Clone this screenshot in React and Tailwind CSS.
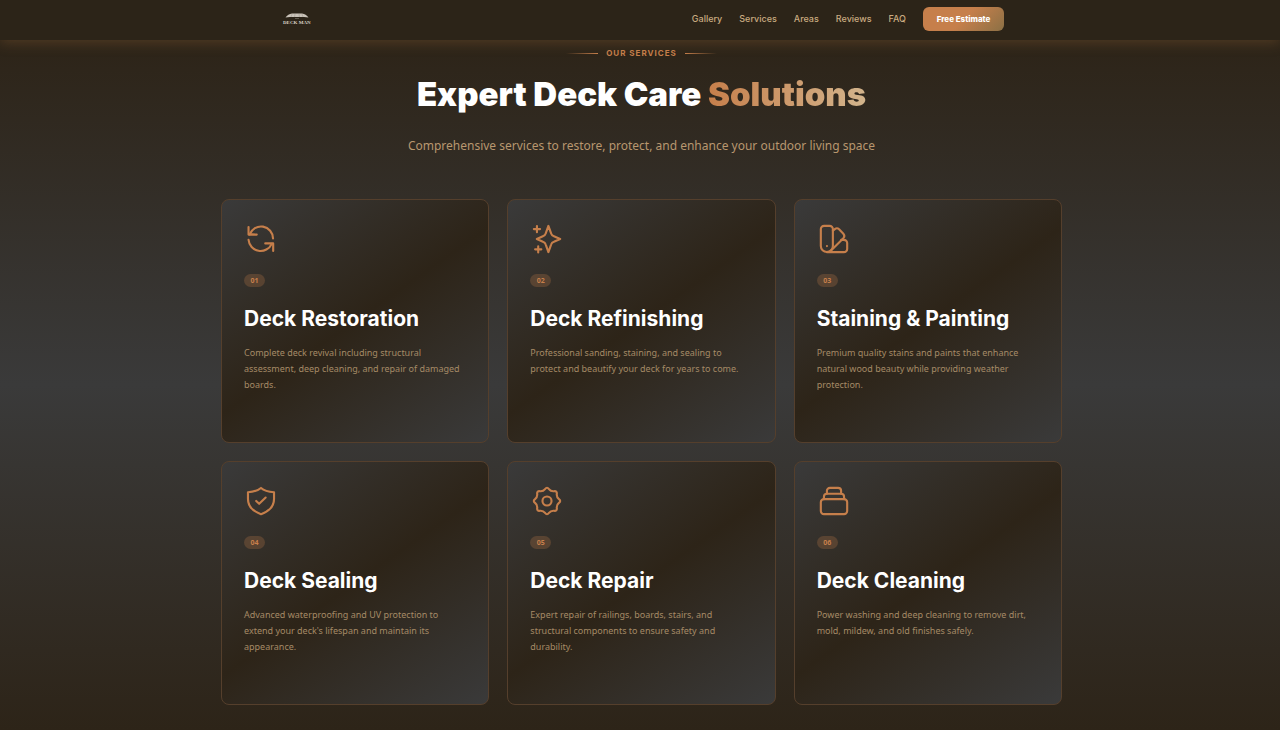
import React from "react";

const navLinks = ["Gallery", "Services", "Areas", "Reviews", "FAQ"];

// Gear outline: eight rounded teeth, alternating outer and inner control points
const gearPath = (() => {
  const points = Array.from({ length: 16 }, (_, i) => {
    const angle = (i * Math.PI) / 8;
    const radius = i % 2 === 0 ? 10.2 : 7.2;
    return [12 + radius * Math.sin(angle), 12 - radius * Math.cos(angle)];
  });
  const mid = (a, b) => `${((a[0] + b[0]) / 2).toFixed(2)} ${((a[1] + b[1]) / 2).toFixed(2)}`;
  let d = `M${mid(points[15], points[0])}`;
  points.forEach((p, i) => {
    d += `Q${p[0].toFixed(2)} ${p[1].toFixed(2)} ${mid(p, points[(i + 1) % 16])}`;
  });
  return d + "Z";
})();

const services = [
  {
    number: "01",
    title: "Deck Restoration",
    text: "Complete deck revival including structural assessment, deep cleaning, and repair of damaged boards.",
    icon: (
      <>
        <path d="M20.5 11.6A8.5 8.5 0 0 0 4 8.8" />
        <path d="M3.2 3.6V8.9H9L3.6 8.6" />
        <path d="M3.2 12.5A8.6 8.6 0 0 0 19.6 15.4" />
        <path d="M20.6 20.4V15.1H15" />
      </>
    ),
  },
  {
    number: "02",
    title: "Deck Refinishing",
    text: "Professional sanding, staining, and sealing to protect and beautify your deck for years to come.",
    icon: (
      <>
        <path d="M13 2.8 14.9 8.1Q15.4 9.6 16.9 10.1L21.3 12 16.9 13.9Q15.4 14.4 14.9 15.9L13 21.2 11.1 15.9Q10.6 14.4 9.1 13.9L4.8 12 9.1 10.1Q10.6 9.6 11.1 8.1Z" />
        <path d="M4.9 2.8V7.2M2.7 5H7.1" />
        <path d="M5.8 17.1V21.5M3.6 19.3H8" />
      </>
    ),
  },
  {
    number: "03",
    title: "Staining & Painting",
    text: "Premium quality stains and paints that enhance natural wood beauty while providing weather protection.",
    icon: (
      <>
        <path d="M11.2 16.9a4.25 4.25 0 0 1-8.5 0V5a2.3 2.3 0 0 1 2.3-2.3h3.9A2.3 2.3 0 0 1 11.2 5Z" />
        <path d="M11.2 6.2 12.6 5a2.3 2.3 0 0 1 3 .1l3 3.2a2.3 2.3 0 0 1 0 3.1L9.9 20.1" />
        <path d="M17.1 12.6H19a2.3 2.3 0 0 1 2.3 2.3V19a2.3 2.3 0 0 1-2.3 2.3H7" />
        <path d="M7 17h.01" />
      </>
    ),
  },
  {
    number: "04",
    title: "Deck Sealing",
    text: "Advanced waterproofing and UV protection to extend your deck's lifespan and maintain its appearance.",
    icon: (
      <>
        <path d="M12 2.8C10.2 4.4 7.2 5.5 2.8 5.8V10.5C2.8 16.2 7.6 19.7 12 21.3 16.4 19.7 21.2 16.2 21.2 10.5V5.8C16.8 5.5 13.8 4.4 12 2.8Z" />
        <path d="M8.6 12 10.7 14 15.3 9.6" />
      </>
    ),
  },
  {
    number: "05",
    title: "Deck Repair",
    text: "Expert repair of railings, boards, stairs, and structural components to ensure safety and durability.",
    icon: (
      <>
        <path d={gearPath} />
        <circle cx="12" cy="12" r="3.2" />
      </>
    ),
  },
  {
    number: "06",
    title: "Deck Cleaning",
    text: "Power washing and deep cleaning to remove dirt, mold, mildew, and old finishes safely.",
    icon: (
      <>
        <rect x="2.7" y="10.7" width="18.6" height="10.6" rx="2.2" />
        <path d="M4.9 10.7V9a2.1 2.1 0 0 1 2.1-2.1h10A2.1 2.1 0 0 1 19.1 9v1.7" />
        <path d="M7 6.9V4.8a2.1 2.1 0 0 1 2.1-2.1h5.8A2.1 2.1 0 0 1 17 4.8v2.1" />
      </>
    ),
  },
];

const Logo = () => (
  <a href="#home" className="flex flex-col items-center">
    <svg viewBox="0 0 24 6" className="h-[6px] w-[24px]" aria-hidden="true">
      <path d="M0.5 4.6Q3 1 7 0.4H17Q21 1 23.5 4.6L19 4.1H5Z" fill="#c9c2b8" />
      <path d="M7 1.2 6 4M10 0.8 9.6 4M14 0.8 14.4 4M17 1.2 18 4" stroke="#8f887d" strokeWidth="0.4" />
      <path d="M10 5.5h4" stroke="#8f887d" strokeWidth="0.5" />
    </svg>
    <span className="font-['Liberation_Serif',serif] text-[5px] leading-[7px] font-bold text-[#d8d0c4]">
      DECK MAN
    </span>
  </a>
);

const Header = () => (
  <header className="relative flex h-10 items-center justify-center bg-[#2c2418] pb-[2px] shadow-[0_2px_14px_rgba(160,108,60,0.35)]">
    <div className="flex w-full max-w-[728px] items-center justify-between pl-[7px]">
      <Logo />
      <nav className="flex items-center gap-[17px]">
        {navLinks.map((link) => (
          <a key={link} href={`#${link.toLowerCase()}`} className="text-[9px] font-medium text-[#c9ab80]">
            {link}
          </a>
        ))}
        <button
          type="button"
          className="h-6 w-[81px] rounded-[6px] bg-[linear-gradient(135deg,#c67f4b_0%,#c67f4b_50%,#8b7045_100%)] text-[8px] font-extrabold text-white"
        >
          Free Estimate
        </button>
      </nav>
    </div>
  </header>
);

const ServiceCard = ({ service }) => (
  <article className="flex min-h-[244px] flex-col items-start rounded-lg border border-[#553f2c] bg-[linear-gradient(145deg,#3a3a3a_0%,#2d2418_50%,#3a3a3a_100%)] p-[22px]">
    <svg
      viewBox="0 0 24 24"
      className="size-[34px]"
      fill="none"
      stroke="#c67f4b"
      strokeWidth="1.5"
      strokeLinecap="round"
      strokeLinejoin="round"
      aria-hidden="true"
    >
      {service.icon}
    </svg>
    <span className="mt-[18px] flex h-[13px] w-[21px] items-center justify-center rounded-full bg-[#c67f4b]/25 font-['Noto_Sans',sans-serif] text-[7px] leading-[13px] font-bold text-[#c67f4b]">
      {service.number}
    </span>
    <h3 className="mt-[18px] text-[21px] leading-7 font-bold whitespace-nowrap text-white">{service.title}</h3>
    <p className="mt-3 font-['Noto_Sans',sans-serif] text-[9px] leading-4 text-[#a58a66]">{service.text}</p>
  </article>
);

const App = () => {
  return (
    <div className="min-h-screen bg-[#2d2418] font-['Inter',sans-serif]">
      <Header />
      <section
        id="services"
        className="bg-[linear-gradient(180deg,#2d2418_0%,#3a3a3a_50%,#2d2418_100%)] pt-2 pb-[25px] pl-[3px]"
      >
        <div className="flex flex-col items-center text-center">
          <div className="flex items-center gap-2">
            <span className="h-px w-8 bg-linear-to-r from-transparent to-[#c67f4b]" />
            <p className="text-[8px] leading-[10px] font-bold tracking-[1px] text-[#c67f4b]">OUR SERVICES</p>
            <span className="h-px w-8 bg-linear-to-r from-[#c67f4b] to-transparent" />
          </div>
          <h2 className="mt-4 text-[33px] leading-10 font-black text-white">
            Expert Deck Care{" "}
            <span className="bg-linear-to-r from-[#c67f4b] to-[#d2b48c] bg-clip-text text-transparent">Solutions</span>
          </h2>
          <p className="mt-5 font-['Noto_Sans',sans-serif] text-[12px] leading-6 text-[#b8976f]">
            Comprehensive services to restore, protect, and enhance your outdoor living space
          </p>
        </div>
        <div className="mx-auto mt-[41px] grid max-w-[841px] grid-cols-3 gap-[18px]">
          {services.map((service) => (
            <ServiceCard key={service.number} service={service} />
          ))}
        </div>
      </section>
    </div>
  );
};

export default App;
